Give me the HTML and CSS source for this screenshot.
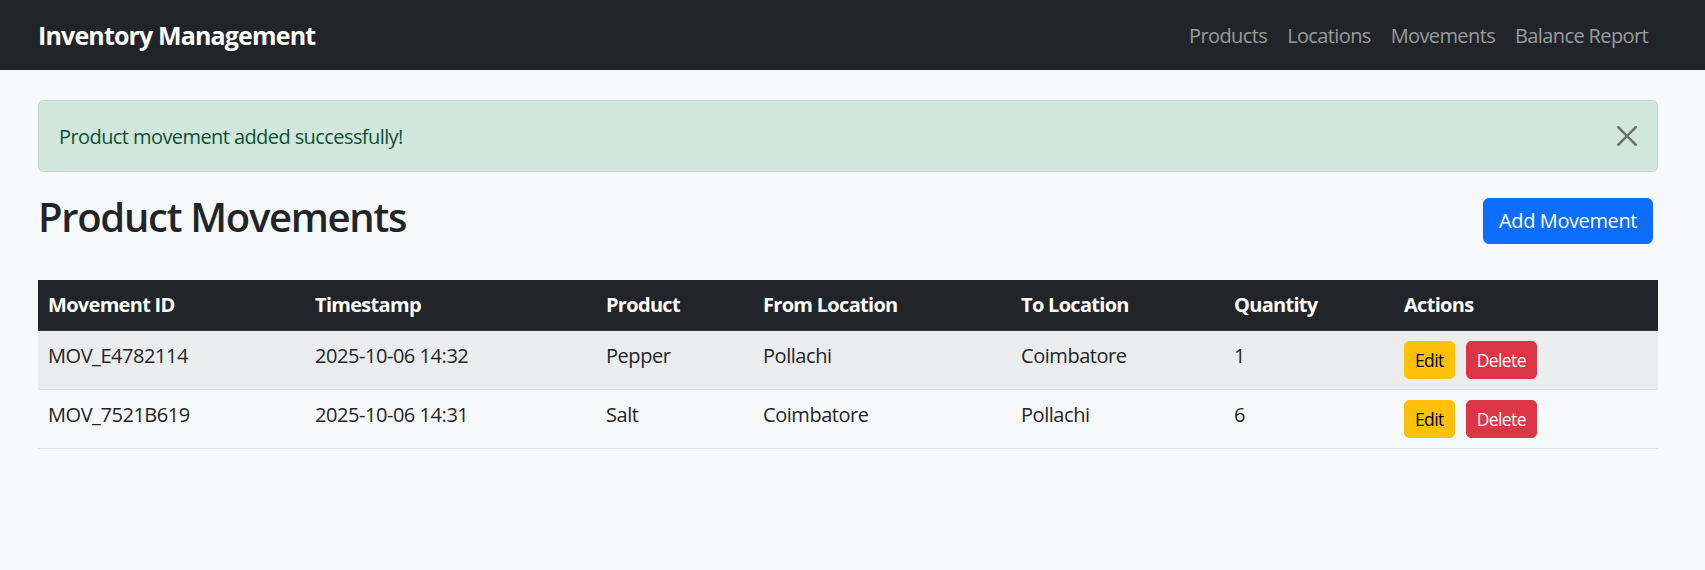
FILE: index.html
```html
<!DOCTYPE html>
<html lang="en">
<head>
<meta charset="utf-8">
<title>Product Movements</title>
<link rel="stylesheet" href="styles.css">
</head>
<body>
<nav class="navbar">
  <div class="container nav-inner">
    <a class="brand" href="#">Inventory Management</a>
    <ul class="nav-links">
      <li><a href="#">Products</a></li>
      <li><a href="#">Locations</a></li>
      <li><a href="#">Movements</a></li>
      <li><a href="#">Balance Report</a></li>
    </ul>
  </div>
</nav>
<main class="container main">
  <div class="alert">
    <span>Product movement added successfully!</span>
    <button class="btn-close" type="button" aria-label="Close">
      <svg viewBox="0 0 16 16" width="20" height="20"><path d="M.293.293a1 1 0 0 1 1.414 0L8 6.586 14.293.293a1 1 0 1 1 1.414 1.414L9.414 8l6.293 6.293a1 1 0 0 1-1.414 1.414L8 9.414l-6.293 6.293a1 1 0 0 1-1.414-1.414L6.586 8 .293 1.707a1 1 0 0 1 0-1.414z"/></svg>
    </button>
  </div>
  <div class="page-head">
    <h2>Product Movements</h2>
    <a class="btn btn-primary" href="#">Add Movement</a>
  </div>
  <table class="table">
    <colgroup>
      <col class="c1"><col class="c2"><col class="c3"><col class="c4"><col class="c5"><col class="c6"><col class="c7">
    </colgroup>
    <thead>
      <tr>
        <th>Movement ID</th>
        <th>Timestamp</th>
        <th>Product</th>
        <th>From Location</th>
        <th>To Location</th>
        <th>Quantity</th>
        <th>Actions</th>
      </tr>
    </thead>
    <tbody>
      <tr class="odd">
        <td>MOV_E4782114</td>
        <td>2025-10-06 14:32</td>
        <td>Pepper</td>
        <td>Pollachi</td>
        <td>Coimbatore</td>
        <td>1</td>
        <td><div class="actions"><a class="btn btn-sm btn-warning" href="#">Edit</a><a class="btn btn-sm btn-danger" href="#">Delete</a></div></td>
      </tr>
      <tr>
        <td>MOV_7521B619</td>
        <td>2025-10-06 14:31</td>
        <td>Salt</td>
        <td>Coimbatore</td>
        <td>Pollachi</td>
        <td>6</td>
        <td><div class="actions"><a class="btn btn-sm btn-warning" href="#">Edit</a><a class="btn btn-sm btn-danger" href="#">Delete</a></div></td>
      </tr>
    </tbody>
  </table>
</main>
</body>
</html>
```
FILE: styles.css
```css
* { box-sizing: border-box; }
html, body { margin: 0; padding: 0; }
body {
  background: #f8f9fa;
  color: #212529;
  font-family: "Open Sans", "Noto Sans", "Liberation Sans", sans-serif;
  font-size: 20px;
  line-height: 1.5;
}
.container {
  width: 1705px;
  padding: 0 47px 0 38px;
}
.navbar {
  background: #212529;
  padding: 10px 0;
}
.nav-inner {
  display: flex;
  align-items: center;
  justify-content: space-between;
}
.brand {
  color: #fff;
  text-decoration: none;
  font-size: 25px;
  font-weight: 700;
  line-height: 37.5px;
  padding: 7.25px 0 5.25px;
  letter-spacing: -0.85px;
}
.nav-links {
  list-style: none;
  margin: 0;
  padding: 0;
  display: flex;
}
.nav-links a {
  display: block;
  padding: 11px 10px 9px;
  line-height: 30px;
  color: rgba(255,255,255,.55);
  text-decoration: none;
  letter-spacing: -0.62px;
}
.main { padding-top: 30px; }
.alert {
  position: relative;
  background: #d1e7dd;
  border: 1px solid #badbcc;
  color: #0f5132;
  border-radius: 5px;
  padding: 21px 60px 19px 20px;
  margin-bottom: 20px;
  line-height: 30px;
  letter-spacing: -0.58px;
}
.btn-close {
  position: absolute;
  top: 0;
  right: 0;
  height: 100%;
  padding: 0 20px;
  border: 0;
  background: transparent;
  display: flex;
  align-items: center;
  opacity: .5;
  cursor: pointer;
}
.btn-close svg { display: block; fill: #000; }
.page-head {
  display: flex;
  justify-content: space-between;
  align-items: center;
  margin-bottom: 30px;
  padding-right: 5px;
}
.page-head h2 {
  margin: 0 0 10px;
  padding-top: 1px;
  font-size: 40px;
  font-weight: 600;
  line-height: 47px;
  letter-spacing: -1.3px;
}
.btn {
  display: inline-block;
  text-decoration: none;
  border: 1px solid transparent;
  border-radius: 6px;
  line-height: 30px;
  padding: 7px 15px;
  font-size: 20px;
  letter-spacing: -0.4px;
}
.btn-primary { background: #0d6efd; border-color: #0d6efd; color: #fff; }
.btn-sm {
  font-size: 17.5px;
  line-height: 26px;
  padding: 5px 10px;
  border-radius: 5px;
  letter-spacing: -0.6px;
}
.btn-warning { background: #ffc107; border-color: #ffc107; color: #000; }
.btn-danger { background: #dc3545; border-color: #dc3545; color: #fff; }
.table {
  width: 1620px;
  border-collapse: collapse;
  table-layout: fixed;
  letter-spacing: -0.45px;
}
.c1 { width: 267px; }
.c2 { width: 291px; }
.c3 { width: 157px; }
.c4 { width: 258px; }
.c5 { width: 213px; }
.c6 { width: 170px; }
.c7 { width: 264px; }
.table th, .table td {
  padding: 10px;
  text-align: left;
  vertical-align: top;
  line-height: 30px;
  border-bottom: 1px solid #dee2e6;
}
.table th {
  background: #212529;
  color: #fff;
  font-weight: 700;
  letter-spacing: -0.7px;
  border-bottom-color: #373b3e;
}
.table tr.odd td { background: #ebeced; }
.actions {
  display: flex;
  gap: 11px;
}
```
